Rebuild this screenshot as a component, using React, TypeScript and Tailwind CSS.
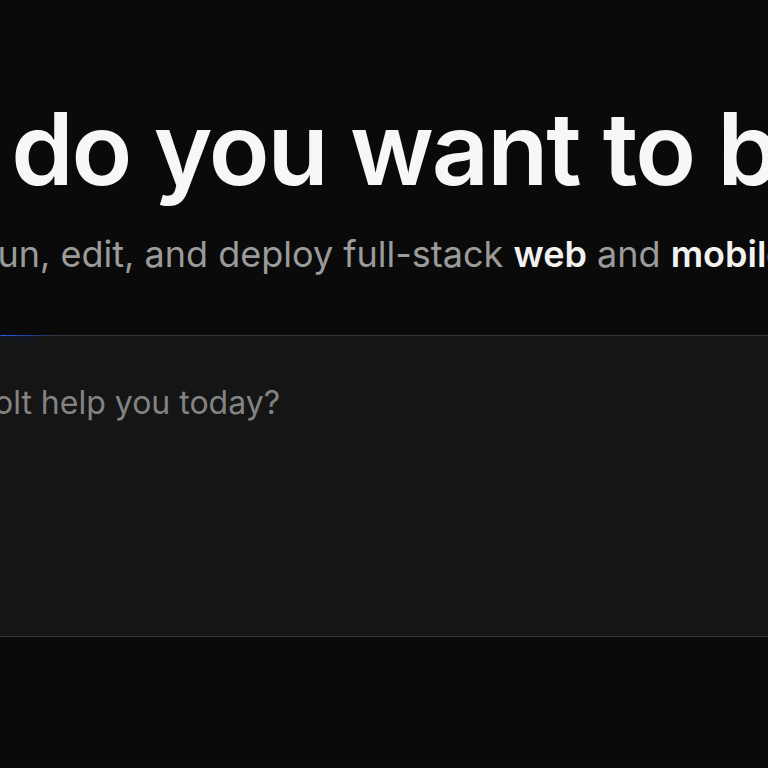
export default function App() {
  return (
    <div className="h-[768px] w-full overflow-hidden bg-[#0a0a0a] font-['Inter',sans-serif]">
      <div className="flex flex-col items-center pt-[99px]">
        {/* Headline */}
        <h1 className="ml-[-30px] whitespace-nowrap text-[100px] font-semibold leading-none tracking-[-0.02em] text-[#f7f7f7]">
          What do you want to build?
        </h1>

        {/* Subtitle */}
        <p className="ml-[-36px] mt-[37px] whitespace-nowrap text-[36px] leading-none text-[#9b9b9b]">
          Prompt, run, edit, and deploy full-stack{" "}
          <span className="font-semibold text-[#f2f2f2]">web</span> and{" "}
          <span className="font-semibold text-[#f2f2f2]">mobile</span> apps.
        </p>
      </div>

      {/* Prompt box */}
      <div className="relative mx-[-200px] mt-[63px] h-[302px] rounded-[12px] border border-[#363636] bg-[#151515]">
        {/* blue glow on the top edge */}
        <div className="absolute left-[200px] top-[-1px] h-[1px] w-[60px] bg-gradient-to-r from-[#2563eb] via-[#1e3a8a] to-transparent" />
        <div className="absolute left-[200px] top-0 h-[10px] w-[36px] bg-gradient-to-b from-[#0f1a33]/40 to-transparent" />
        <div className="pl-[30px] pt-[51px] text-[32px] leading-none text-[#838383]">
          How can Bolt help you today?
        </div>
      </div>
    </div>
  );
}
